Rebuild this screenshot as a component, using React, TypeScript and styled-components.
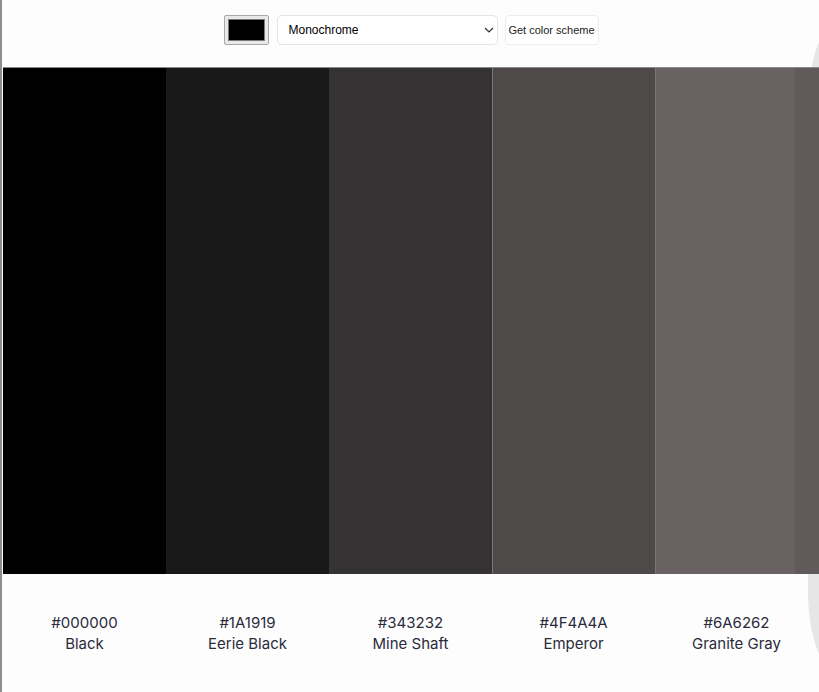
import React, { useState } from "react";
import styled, { createGlobalStyle } from "styled-components";

interface swatchType {
  hex: string;
  name: string;
  edge?: boolean;
}

const swatches: swatchType[] = [
  { hex: "#000000", name: "Black" },
  { hex: "#1A1919", name: "Eerie Black" },
  { hex: "#343232", name: "Mine Shaft" },
  { hex: "#4F4A4A", name: "Emperor", edge: true },
  { hex: "#6A6262", name: "Granite Gray", edge: true },
];

const schemes = [
  "Monochrome",
  "Monochrome-dark",
  "Monochrome-light",
  "Analogic",
  "Complement",
  "Analogic-complement",
  "Triad",
  "Quad",
];

const Chevron = () => (
  <svg width="10" height="6" viewBox="0 0 10 6" fill="none">
    <path d="M1 1l4 4 4-4" stroke="#333" strokeWidth="1.2" />
  </svg>
);

export default function App(): React.ReactElement {
  const [seed, setSeed] = useState("#000000");
  const [mode, setMode] = useState("Monochrome");
  return (
    <React.Fragment>
      <GlobalStyle />
      <Page>
        <SidePanel />
        <Toolbar>
          <ColorInput
            type="color"
            value={seed}
            onChange={(e) => setSeed(e.target.value)}
          />
          <SelectWrap>
            <SchemeSelect
              value={mode}
              onChange={(e) => setMode(e.target.value)}
            >
              {schemes.map((s) => (
                <option key={s}>{s}</option>
              ))}
            </SchemeSelect>
            <ChevronSlot>
              <Chevron />
            </ChevronSlot>
          </SelectWrap>
          <GetButton>Get color scheme</GetButton>
        </Toolbar>
        <SwatchRow>
          {swatches.map((item) => (
            <SwatchColumn key={item.hex}>
              <ColorBlock $color={item.hex} $edge={item.edge} />
              <Label>
                <span>{item.hex}</span>
                <span>{item.name}</span>
              </Label>
            </SwatchColumn>
          ))}
          <PeekSwatch $color="#615A5A" />
        </SwatchRow>
      </Page>
    </React.Fragment>
  );
}

const GlobalStyle = createGlobalStyle`
  body {
    margin: 0;
    background: #fdfdfd;
    font-family: "Liberation Sans", Arial, sans-serif;
  }
`;

const Page = styled.div`
  position: relative;
  height: 692px;
  overflow: hidden;
  border-left: 2px solid #8e8e8e;
  padding-left: 1px;
  box-sizing: border-box;
`;

const SidePanel = styled.div`
  position: absolute;
  top: 14px;
  bottom: 10px;
  right: -30px;
  width: 41px;
  background: #e6e6e6;
  border-radius: 40px 0 0 40px / 90px 0 0 90px;
`;

const Toolbar = styled.div`
  position: relative;
  display: flex;
  justify-content: center;
  align-items: center;
  gap: 8px;
  padding-top: 15px;
  height: 30px;
`;

const ColorInput = styled.input`
  width: 45px;
  height: 30px;
  margin: 0;
  padding: 0;
  box-sizing: border-box;
  background: #e9e9e9;
  border: 1px solid #a9a9a9;
  border-radius: 2px;
  cursor: pointer;

  &::-webkit-color-swatch-wrapper {
    padding: 3px 3px;
  }
  &::-webkit-color-swatch {
    border: 1px solid #7a7a7a;
    border-radius: 0;
  }
`;

const SelectWrap = styled.div`
  position: relative;
  display: flex;
`;

const SchemeSelect = styled.select`
  appearance: none;
  width: 221px;
  height: 30px;
  padding: 0 24px 0 11px;
  border: 1px solid #e4e4e4;
  border-radius: 5px;
  background: #fff;
  font-family: "Liberation Sans", Arial, sans-serif;
  font-size: 12px;
  color: #000;
`;

const ChevronSlot = styled.span`
  position: absolute;
  right: 4px;
  top: 12px;
  display: flex;
  pointer-events: none;
`;

const GetButton = styled.button`
  height: 30px;
  width: 94px;
  padding: 0;
  border: 1px solid #ececec;
  border-radius: 4px;
  background: #fff;
  font-family: "Liberation Sans", Arial, sans-serif;
  font-size: 11px;
  color: #222;
  margin-left: -1px;
`;

const SwatchRow = styled.div`
  position: relative;
  display: flex;
  margin-top: 22px;
`;

const SwatchColumn = styled.div`
  display: flex;
  flex-direction: column;
  flex: 0 0 163px;
`;

const ColorBlock = styled.div<{ $color: string; $edge?: boolean }>`
  height: 507px;
  background: ${(props) => props.$color};
  border-top: 1px solid #8a8a8a;
  border-left: ${(props) => (props.$edge ? "1px solid #7b7777" : "none")};
  box-sizing: border-box;
`;

const PeekSwatch = styled.div<{ $color: string }>`
  position: absolute;
  top: 0;
  right: 0;
  width: 24px;
  height: 507px;
  background: ${(props) => props.$color};
  border-top: 1px solid #8a8a8a;
  box-sizing: border-box;
`;

const Label = styled.div`
  display: flex;
  flex-direction: column;
  align-items: center;
  padding-top: 38px;
  font-family: Inter, "Liberation Sans", sans-serif;
  font-size: 15px;
  line-height: 21px;
  color: #2a2b3b;
`;
